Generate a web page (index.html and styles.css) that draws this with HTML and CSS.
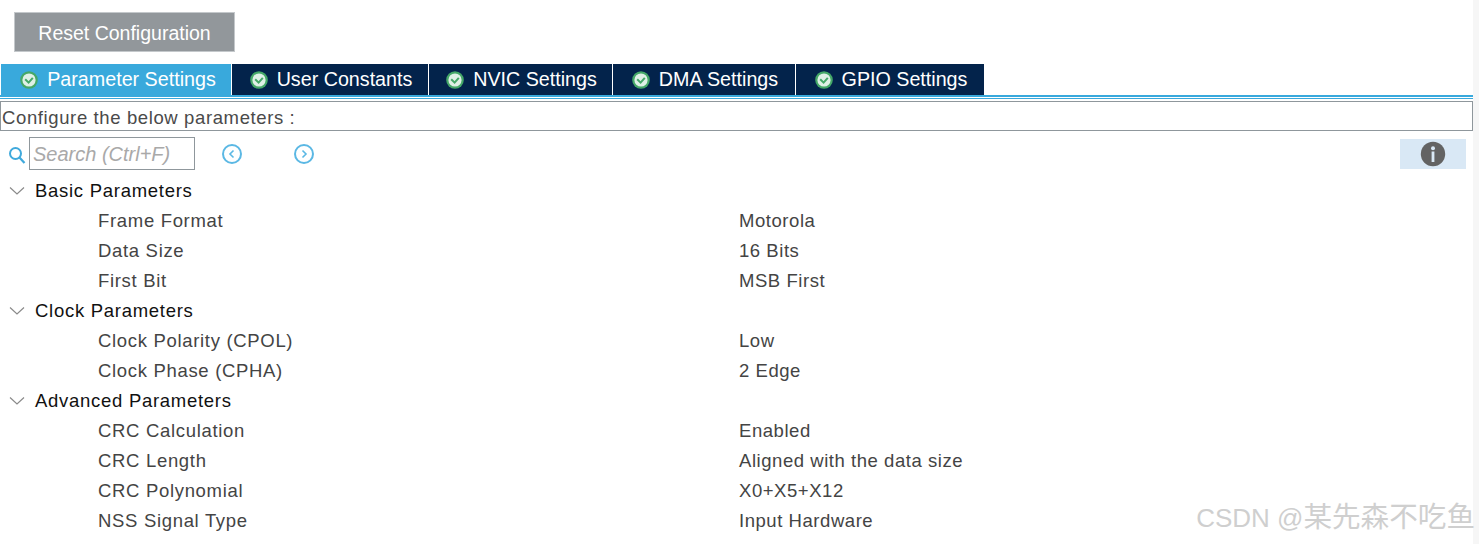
FILE: index.html
```html
<!DOCTYPE html>
<html lang="en">
<head>
<meta charset="UTF-8">
<meta name="viewport" content="width=device-width, initial-scale=1.0">
<title>Parameter Settings</title>
<link rel="stylesheet" href="styles.css">
</head>
<body>

<svg class="defs" width="0" height="0">
    <symbol id="ok" viewBox="0 0 18 18">
        <circle cx="9" cy="9" r="8.8" fill="#45a868"/>
        <circle cx="9" cy="9" r="6.6" fill="#dff0e6"/>
        <path d="M5.2 8.2 L8.6 11.6 L12.8 6.8" fill="none" stroke="#45a868" stroke-width="2"/>
    </symbol>
</svg>

<div class="page">
    <div class="toolbar">
        <button class="reset">Reset Configuration</button>
    </div>

    <div class="tabs">
        <div class="tab active tab-1"><svg class="ok"><use href="#ok"/></svg>Parameter Settings</div>
        <div class="tab tab-2"><svg class="ok"><use href="#ok"/></svg>User Constants</div>
        <div class="tab tab-3"><svg class="ok"><use href="#ok"/></svg>NVIC Settings</div>
        <div class="tab tab-4"><svg class="ok"><use href="#ok"/></svg>DMA Settings</div>
        <div class="tab tab-5"><svg class="ok"><use href="#ok"/></svg>GPIO Settings</div>
    </div>
    <div class="tab-rule"></div>

    <div class="configure">Configure the below parameters :</div>

    <div class="search-row">
        <svg class="search-icon" width="18" height="20" viewBox="0 0 18 20">
            <circle cx="7.5" cy="8.5" r="5.5" fill="none" stroke="#3fa9dc" stroke-width="2"/>
            <path d="M11.5 12.5 L16.5 18" stroke="#3fa9dc" stroke-width="2.2"/>
        </svg>
        <div class="search">Search (Ctrl+F)</div>
        <svg class="nav prev" width="22" height="22" viewBox="0 0 22 22">
            <circle cx="11" cy="11" r="9" fill="none" stroke="#5bb8e4" stroke-width="2"/>
            <path d="M12.5 7.5 L9 11 L12.5 14.5" fill="none" stroke="#5bb8e4" stroke-width="1.6"/>
        </svg>
        <svg class="nav next" width="22" height="22" viewBox="0 0 22 22">
            <circle cx="11" cy="11" r="9" fill="none" stroke="#5bb8e4" stroke-width="2"/>
            <path d="M9.5 7.5 L13 11 L9.5 14.5" fill="none" stroke="#5bb8e4" stroke-width="1.6"/>
        </svg>
        <div class="info">
            <svg width="26" height="26" viewBox="0 0 26 26">
                <circle cx="13" cy="13" r="12.2" fill="#636363"/>
                <circle cx="13" cy="7.2" r="2" fill="#d9e8f5"/>
                <rect x="11.6" y="10.5" width="2.8" height="10.5" fill="#d9e8f5"/>
            </svg>
        </div>
    </div>

    <div class="params">
        <div class="group"><svg class="chev" width="16" height="10" viewBox="0 0 16 10"><path d="M1 1.5 L8 8 L15 1.5" fill="none" stroke="#8a8a8a" stroke-width="1.2"/></svg>Basic Parameters</div>
        <div class="row"><span class="name">Frame Format</span><span class="value">Motorola</span></div>
        <div class="row"><span class="name">Data Size</span><span class="value">16 Bits</span></div>
        <div class="row"><span class="name">First Bit</span><span class="value">MSB First</span></div>
        <div class="group"><svg class="chev" width="16" height="10" viewBox="0 0 16 10"><path d="M1 1.5 L8 8 L15 1.5" fill="none" stroke="#8a8a8a" stroke-width="1.2"/></svg>Clock Parameters</div>
        <div class="row"><span class="name">Clock Polarity (CPOL)</span><span class="value">Low</span></div>
        <div class="row"><span class="name">Clock Phase (CPHA)</span><span class="value">2 Edge</span></div>
        <div class="group"><svg class="chev" width="16" height="10" viewBox="0 0 16 10"><path d="M1 1.5 L8 8 L15 1.5" fill="none" stroke="#8a8a8a" stroke-width="1.2"/></svg>Advanced Parameters</div>
        <div class="row"><span class="name">CRC Calculation</span><span class="value">Enabled</span></div>
        <div class="row"><span class="name">CRC Length</span><span class="value">Aligned with the data size</span></div>
        <div class="row"><span class="name">CRC Polynomial</span><span class="value">X0+X5+X12</span></div>
        <div class="row"><span class="name">NSS Signal Type</span><span class="value">Input Hardware</span></div>
    </div>

    <div class="watermark">CSDN @<span class="watermark-cjk">某先森不吃鱼</span></div>
</div>

</body>
</html>
```

FILE: styles.css
```css
html, body {
    margin: 0;
    height: 100%;
    overflow: hidden;
}

body {
    background-color: #f6f6f6;
    font-family: 'Liberation Sans', Arial, sans-serif;
    font-size: 18.5px;
}

.defs {
    display: block;
    height: 0;
}

.page {
    position: relative;
    width: 1473px;
    height: 544px;
    background-color: #fff;
}

.toolbar {
    height: 64px;
    padding: 12px 0 0 14px;
    box-sizing: border-box;
}

.reset {
    display: block;
    width: 221px;
    height: 40px;
    padding: 2px 0 0;
    border: 1px solid #c4c8cb;
    background-color: #92979b;
    color: #fff;
    font-family: inherit;
    font-size: 19.5px;
}

.tabs {
    display: flex;
    height: 31px;
    padding-left: 1px;
}

.tab {
    display: flex;
    align-items: center;
    justify-content: center;
    gap: 9px;
    box-sizing: border-box;
    padding-left: 2px;
    margin-right: 1px;
    background-color: #03234b;
    color: #fff;
    font-size: 19.7px;
}

.tab.active {
    background-color: #39a9dc;
}

.tab-1 { width: 230px; padding-left: 4px; }
.tab-2 { width: 196px; }
.tab-3 { width: 183px; }
.tab-4 { width: 182px; }
.tab-5 { width: 188px; margin-right: 0; }

.ok {
    width: 18px;
    height: 18px;
}

.tab-rule {
    height: 1px;
    border-top: 2px solid #39a9dc;
    border-bottom: 1px solid #39a9dc;
    margin-bottom: 2px;
}

.configure {
    height: 30px;
    line-height: 31px;
    padding-left: 1px;
    box-sizing: border-box;
    border: 1px solid #8f979c;
    color: #4a4a4a;
    letter-spacing: 0.62px;
}

.search-row {
    display: flex;
    align-items: center;
    height: 33px;
    margin-top: 6px;
    padding-left: 8px;
}

.search-icon {
    margin-right: 3px;
    margin-top: 2px;
}

.search {
    width: 166px;
    height: 33px;
    line-height: 33px;
    box-sizing: border-box;
    padding-left: 3px;
    border: 1px solid #8f979c;
    color: #a9a9a9;
    font-style: italic;
    font-size: 20px;
}

.nav.prev {
    margin-left: 26px;
}

.nav.next {
    margin-left: 50px;
}

.info {
    display: flex;
    align-items: center;
    justify-content: center;
    width: 66px;
    height: 30px;
    margin-left: auto;
    margin-right: 7px;
    background-color: #d9e8f5;
}

.params {
    margin-top: 6px;
}

.group,
.row {
    display: flex;
    align-items: center;
    height: 30px;
    letter-spacing: 0.55px;
}

.group {
    color: #111;
    letter-spacing: 0.72px;
}

.chev {
    margin: 0 10px 0 9px;
}

.row {
    color: #444;
}

.name {
    width: 641px;
    margin-left: 98px;
    letter-spacing: 0.68px;
}

.watermark {
    position: absolute;
    right: -2px;
    bottom: 9px;
    color: #cfcfcf;
    font-size: 26px;
    font-family: 'Liberation Sans', 'Noto Sans CJK SC', sans-serif;
    white-space: nowrap;
}

.watermark-cjk {
    font-size: 28.6px;
}
```
